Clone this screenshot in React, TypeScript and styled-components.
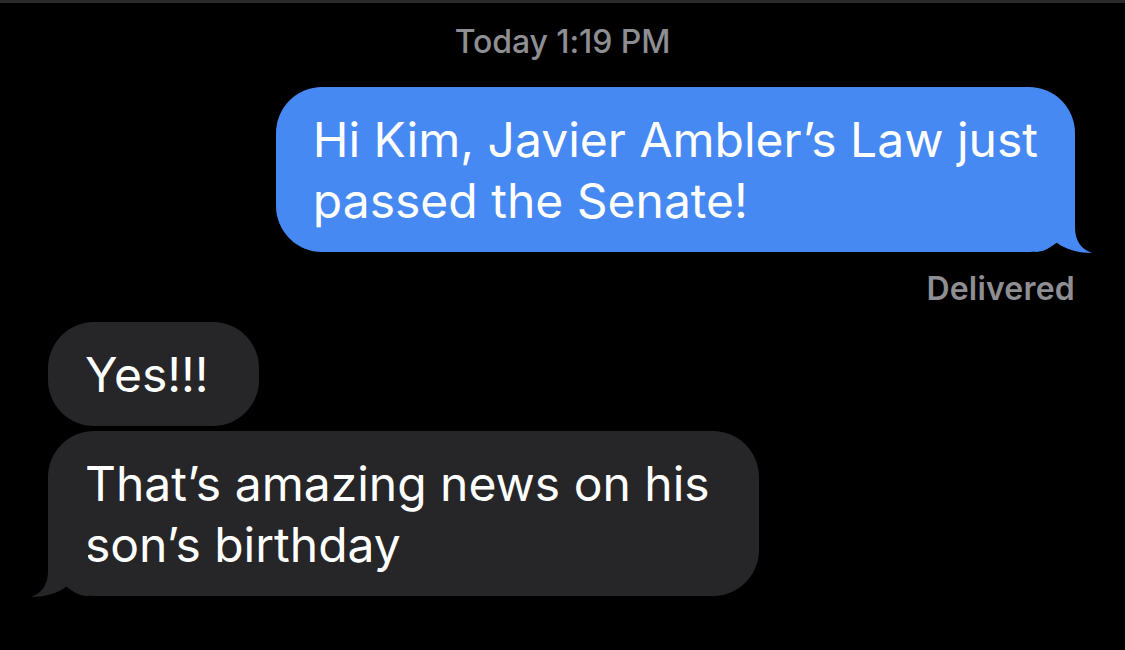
import React from "react";
import styled, { createGlobalStyle } from "styled-components";

const Global = createGlobalStyle`
  html, body { margin: 0; padding: 0; background: #000; }
  body { width: 1125px; height: 650px; overflow: hidden; font-family: Inter, "Liberation Sans", sans-serif; }
`;

const Screen = styled.div`
  width: 1125px;
  height: 650px;
  background: #000;
  border-top: 3px solid #2a2a2c;
  box-sizing: border-box;
  display: flex;
  flex-direction: column;
`;

const Stamp = styled.div`
  text-align: center;
  color: #8e8e93;
  font-size: 32px;
  font-weight: 500;
  line-height: 34px;
  margin-top: 22px;
  letter-spacing: -0.1px;
`;

const Row = styled.div<{ $side: "left" | "right"; $gap: number }>`
  display: flex;
  justify-content: ${(p) => (p.$side === "right" ? "flex-end" : "flex-start")};
  padding: 0 ${(p) => (p.$side === "right" ? "50px" : "0")} 0 ${(p) => (p.$side === "left" ? "48px" : "0")};
  margin-top: ${(p) => p.$gap}px;
`;

const Bubble = styled.div<{ $kind: "sent" | "received"; $padRight?: number }>`
  position: relative;
  background: ${(p) => (p.$kind === "sent" ? "#4689f3" : "#262628")};
  color: #fff;
  font-size: 48px;
  line-height: 61px;
  padding: 22px ${(p) => p.$padRight ?? 37}px 21px 37px;
  border-radius: 46px;
`;

const Tail = styled.svg<{ $side: "left" | "right" }>`
  position: absolute;
  bottom: -1px;
  width: 58px;
  height: 44px;
  ${(p) => (p.$side === "right" ? "right: -18px;" : "left: -18px; transform: scaleX(-1);")}
`;

const Status = styled.div`
  text-align: right;
  padding-right: 50px;
  margin-top: 20px;
  color: #8e8e93;
  font-size: 32px;
  font-weight: 600;
  line-height: 34px;
  letter-spacing: 0.2px;
`;

const TailShape = ({ side, color }: { side: "left" | "right"; color: string }) => (
  <Tail $side={side} viewBox="0 0 58 44">
    <path
      d="M0 43 L0 0 L40 0 L40 18 C40 32 46 40 57 44 C46 44 30 41 21 33 C16 39 8 43 0 43 Z"
      fill={color}
    />
  </Tail>
);

export default function App() {
  return (
    <>
      <Global />
      <Screen>
        <Stamp>Today 1:19 PM</Stamp>
        <Row $side="right" $gap={28}>
          <Bubble $kind="sent">
            Hi Kim, Javier Ambler’s Law just
            <br />
            passed the Senate!
            <TailShape side="right" color="#4689f3" />
          </Bubble>
        </Row>
        <Status>Delivered</Status>
        <Row $side="left" $gap={16}>
          <Bubble $kind="received" $padRight={50}>Yes!!!</Bubble>
        </Row>
        <Row $side="left" $gap={5}>
          <Bubble $kind="received" $padRight={49}>
            That’s amazing news on his
            <br />
            son’s birthday
            <TailShape side="left" color="#262628" />
          </Bubble>
        </Row>
      </Screen>
    </>
  );
}
